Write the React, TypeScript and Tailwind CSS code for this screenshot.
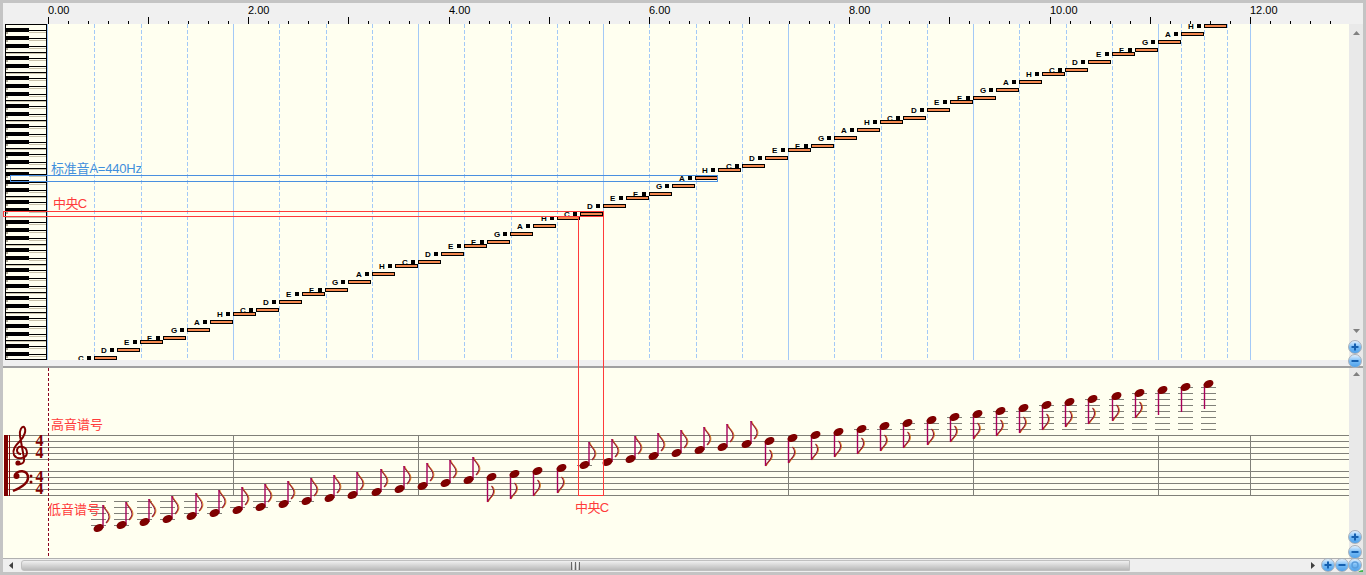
import React from "react";

const NAMES = ["C", "D", "E", "F", "G", "A", "H"];
const OFFS = [0, 8, 16, 20, 28, 36, 44];
const NOTE_COUNT = 49;

const noteX = (i: number) => Math.round(94 + i * 23.125);
const barY = (i: number) =>
  356 - 48 * Math.floor(i / 7) - OFFS[i % 7];

function Ruler() {
  const ticks = Array.from({ length: 65 }, (_, i) => i);
  return (
    <svg width="1357" height="21" viewBox="3 3 1357 21" className="block">
      {ticks.map((i) => {
        const x = Math.round(48 + i * 20.03) + 0.5;
        return (
          <line
            key={i}
            x1={x}
            x2={x}
            y1={i % 5 === 0 ? 17 : 21}
            y2={24}
            stroke="#000"
            shapeRendering="crispEdges"
          />
        );
      })}
      {ticks
        .filter((i) => i % 10 === 0)
        .map((i) => (
          <text
            key={i}
            x={Math.round(48 + i * 20.03)}
            y={14}
            fontSize="11"
            fill="#000"
          >
            {(i / 5).toFixed(2)}
          </text>
        ))}
    </svg>
  );
}

function Piano() {
  const blacks: number[] = [];
  const seps: number[] = [];
  for (let k = 0; k < 7; k++) {
    [30, 38, 46, 58, 66].forEach((o) => blacks.push(o + 48 * k));
    [52, 72].forEach((o) => seps.push(o + 48 * k));
  }
  return (
    <svg width="43" height="336" viewBox="5 24 43 336" className="block" shapeRendering="crispEdges">
      <rect x="5" y="24" width="43" height="336" fill="#fffff0" />
      {seps.map((y) => (
        <g key={y}>
          <rect x="5" y={y} width="42" height="1" fill="#000" />
          <rect x="5" y={y + 1} width="42" height="1" fill="#c8c2ac" />
        </g>
      ))}
      {blacks.map((y) => (
        <g key={y}>
          <rect x="29" y={y + 2} width="18" height="1" fill="#c8c2ac" />
          <rect x="5" y={y + 2} width="3" height="2" fill="#a8a290" />
          <rect x="29" y={y} width="18" height="1" fill="#000" />
          <rect x="5" y={y - 2} width="24" height="4" fill="#000" />
        </g>
      ))}
      <rect x="5" y="24" width="42" height="1" fill="#000" />
      <rect x="5" y="359" width="42" height="1" fill="#000" />
      <rect x="5" y="24" width="1" height="336" fill="#000" />
      <rect x="46" y="24" width="1" height="336" fill="#000" />
      <rect x="47" y="24" width="1" height="336" fill="#a0c8f8" />
    </svg>
  );
}

function PitchGrid() {
  const beats = Array.from({ length: 24 }, (_, i) => i + 1);
  const extra = [1181, 1204, 1227];
  const notes = Array.from({ length: NOTE_COUNT }, (_, i) => i);
  return (
    <svg width="1301" height="336" viewBox="48 24 1301 336" className="block">
      <g shapeRendering="crispEdges" stroke="#a3c9f7">
        {beats.map((b) => {
          const x = Math.round(48 + b * 46.25) + 0.5;
          return (
            <line
              key={b}
              x1={x}
              x2={x}
              y1={24}
              y2={360}
              strokeDasharray={b % 4 === 0 ? undefined : "4 2"}
            />
          );
        })}
        {extra.map((x) => (
          <line key={x} x1={x + 0.5} x2={x + 0.5} y1={24} y2={360} strokeDasharray="4 2" />
        ))}
        <line x1={1250.5} x2={1250.5} y1={24} y2={360} />
      </g>
      {notes.map((i) => {
        const x = noteX(i);
        const y = barY(i);
        return (
          <g key={i}>
            <text x={x - 16} y={y + 5} fontSize="8" fontWeight="700" fill="#000">
              {NAMES[i % 7]}
            </text>
            <rect x={x - 7} y={y} width="4" height="4" fill="#000" shapeRendering="crispEdges" />
            <rect x={x} y={y} width="23" height="4" fill="#000" shapeRendering="crispEdges" />
            <rect x={x + 1} y={y + 1} width="21" height="2" fill="#f2874e" shapeRendering="crispEdges" />
          </g>
        );
      })}
    </svg>
  );
}

function Note({ i }: { i: number }) {
  const x = noteX(i);
  const y = 528 - 3 * i;
  const up = i <= 16 || (i >= 21 && i <= 28);
  const flag = i <= 45;
  const ledgers: number[] = [];
  for (let l = 501; l <= 525; l += 6) if (l <= y) ledgers.push(l);
  for (let l = 429; l >= 387; l -= 6) if (l >= y) ledgers.push(l);
  if (y === 465) ledgers.push(465);
  const sx = up ? x + 9 : x + 0.5;
  const sEnd = up ? y - 23 : y + 25;
  const flagPath = up
    ? `c 1 5 7 7 6 13 c -0.5 2 -2 4 -3 5`
    : `c 2 -5 7 -6 6 -12 c -0.3 -1.5 -1 -3 -2 -4`;
  return (
    <g>
      {ledgers.map((l) => (
        <line key={l} x1={x - 3} x2={x + 12} y1={l + 0.5} y2={l + 0.5} stroke="#808078" shapeRendering="crispEdges" />
      ))}
      {flag && (
        <>
          <path d={`M ${sx} ${sEnd} ${flagPath}`} fill="none" stroke="#8a1040" strokeWidth="1.2" />
          <path d={`M ${sx + 0.8} ${sEnd} ${flagPath}`} fill="none" stroke="#d06a00" strokeWidth="0.8" />
        </>
      )}
      <line x1={sx} x2={sx} y1={y} y2={sEnd} stroke="#a8005a" strokeWidth="1.4" />
      <ellipse cx={x + 4.5} cy={y} rx="5.2" ry="3.7" transform={`rotate(-25 ${x + 4.5} ${y})`} fill="#7f0000" />
    </g>
  );
}

function Score() {
  const staffY = [435, 441, 447, 453, 459, 471, 477, 483, 489, 495];
  const bars = [233, 418, 603, 788, 973, 1158, 1250];
  const notes = Array.from({ length: NOTE_COUNT }, (_, i) => i);
  return (
    <svg width="1346" height="190" viewBox="3 368 1346 190" className="block">
      {staffY.map((y) => (
        <line key={y} x1={4} x2={1350} y1={y + 0.5} y2={y + 0.5} stroke="#808078" shapeRendering="crispEdges" />
      ))}
      {bars.map((x) => (
        <line key={x} x1={x + 0.5} x2={x + 0.5} y1={435} y2={496} stroke="#808078" shapeRendering="crispEdges" />
      ))}
      <rect x="4" y="435" width="4" height="61" fill="#7f0000" shapeRendering="crispEdges" />
      <rect x="9" y="435" width="1" height="61" fill="#7f0000" shapeRendering="crispEdges" />

      {/* treble clef */}
      <path
        d="M 17 461 C 19 466 25 464 24 458 L 20 436 C 19 430 22 426 24 427 C 27 430 24 437 20 441 C 15 446 12 450 14 455 C 17 460 26 459 27 453 C 27 446 18 444 17 450 C 17 453 19 454 21 454"
        fill="none"
        stroke="#7f0000"
        strokeWidth="2"
      />
      <circle cx="18" cy="463" r="2.6" fill="#7f0000" />

      {/* bass clef */}
      <path
        d="M 15 475 C 17 470 28 469 28 478 C 28 484 20 488 13 491"
        fill="none"
        stroke="#7f0000"
        strokeWidth="2.4"
      />
      <circle cx="16.5" cy="476" r="3" fill="#7f0000" />
      <circle cx="31" cy="476" r="1.5" fill="#7f0000" />
      <circle cx="31" cy="482" r="1.5" fill="#7f0000" />

      {[447, 459, 483, 495].map((y) => (
        <text
          key={y}
          x="39.5"
          y={y - 1}
          textAnchor="middle"
          fontSize="16"
          fontWeight="700"
          fill="#7f0000"
          className="[font-family:'Liberation_Serif',serif]"
        >
          4
        </text>
      ))}

      <line x1="48.5" x2="48.5" y1="368" y2="558" stroke="#8a0020" strokeDasharray="3 2" shapeRendering="crispEdges" />

      {notes.map((i) => (
        <Note key={i} i={i} />
      ))}
    </svg>
  );
}

function Arrow({ dir, color = "#808080" }: { dir: "up" | "down" | "left" | "right"; color?: string }) {
  const points = {
    up: "0,4 7,4 3.5,0",
    down: "0,0 7,0 3.5,4",
    left: "4,0 4,7 0,3.5",
    right: "0,0 0,7 4,3.5",
  }[dir];
  const vertical = dir === "up" || dir === "down";
  return (
    <svg width={vertical ? 7 : 4} height={vertical ? 4 : 7} className="block shrink-0">
      <polygon points={points} fill={color} />
    </svg>
  );
}

function ZoomButton({ kind, className }: { kind: "plus" | "minus" | "reset"; className: string }) {
  return (
    <div
      className={`absolute h-[14px] w-[14px] rounded-full border border-[#a8b0ba] bg-gradient-to-b from-[#e2f1fe] via-[#78bcf5] to-[#4ea2ec] ${className}`}
    >
      <svg width="12" height="12" className="block">
        {kind === "plus" && (
          <path d="M2.5 6H9.5M6 2.5V9.5" stroke="#1560b0" strokeWidth="2" />
        )}
        {kind === "minus" && <path d="M2.5 6H9.5" stroke="#1560b0" strokeWidth="2" />}
        {kind === "reset" && (
          <circle cx="6" cy="6" r="3" fill="none" stroke="#5a9ddc" strokeWidth="1.5" />
        )}
      </svg>
    </div>
  );
}

function Labels() {
  return (
    <>
      <span className="absolute left-[51px] top-[162px] text-[13px] leading-[13px] tracking-[-0.2px] text-[#3f8fdc]">
        标准音A=440Hz
      </span>
      <span className="absolute left-[53px] top-[197px] text-[13px] leading-[13px] tracking-[-0.6px] text-[#ff3b3b]">
        中央C
      </span>
      <span className="absolute left-[51px] top-[418px] text-[13px] leading-[13px] text-[#ff3b3b]">
        高音谱号
      </span>
      <span className="absolute left-[48px] top-[503px] text-[13px] leading-[13px] text-[#ff3b3b]">
        低音谱号
      </span>
      <span className="absolute left-[575px] top-[501px] text-[13px] leading-[13px] tracking-[-0.6px] text-[#ff3b3b]">
        中央C
      </span>
    </>
  );
}

export default function App() {
  return (
    <div className="relative box-border h-[575px] w-[1366px] overflow-hidden border-[3px] border-[#c4c4c4] bg-[#f0f0f0] [font-family:'Liberation_Sans','Noto_Sans_CJK_SC',sans-serif]">
      <div className="flex h-[21px] items-start">
        <Ruler />
      </div>

      {/* pitch pane */}
      <div className="flex h-[336px]">
        <div className="w-[45px] pl-[2px]">
          <Piano />
        </div>
        <div className="w-[1301px] bg-[#fffff0]">
          <PitchGrid />
        </div>
        <div className="flex w-[14px] flex-col items-center justify-between bg-[#e9e9e9] pb-[27px] pt-[7px]">
          <Arrow dir="up" />
          <Arrow dir="down" />
        </div>
      </div>
      <div className="h-[6px]" />
      <div className="h-[2px] bg-[#a0a0a0]" />

      {/* score pane */}
      <div className="flex h-[190px]">
        <div className="w-[1346px] bg-[#fffff0]">
          <Score />
        </div>
        <div className="flex w-[14px] flex-col items-center bg-[#e9e9e9] pt-[4px]">
          <Arrow dir="up" />
        </div>
      </div>

      {/* horizontal scrollbar */}
      <div className="flex h-[14px] items-center border-t border-[#b0b0b0] bg-[#efefef]">
        <div className="flex w-[18px] justify-start pl-[6px]">
          <Arrow dir="left" color="#404040" />
        </div>
        <div className="flex h-[11px] w-[1109px] items-center justify-center gap-[1px] rounded-l-[3px] border border-[#c0c0c0] bg-gradient-to-b from-[#f0f0f0] to-[#b9b9b9]">
          <span className="h-[8px] w-[1px] bg-[#666]" />
          <span className="h-[8px] w-[1px] bg-[#eee]" />
          <span className="h-[8px] w-[1px] bg-[#666]" />
          <span className="h-[8px] w-[1px] bg-[#eee]" />
          <span className="h-[8px] w-[1px] bg-[#666]" />
        </div>
        <div className="ml-[181px]">
          <Arrow dir="right" color="#404040" />
        </div>
      </div>

      {/* overlays, positioned against the padding box: subtract the 3px frame */}
      <div className="absolute -left-[3px] -top-[3px] h-[575px] w-[1366px] overflow-hidden">
        <Labels />
        <div className="absolute left-[10px] top-[175px] h-[7px] w-[708px] border border-[#4a90e0]" />
        <div className="absolute left-[3px] top-[211px] h-[6px] w-[601px] border border-[#ff3b3b]" />
        <div className="absolute left-[578px] top-[216px] h-[280px] w-[26px] border border-[#ff3b3b]" />
        <ZoomButton kind="plus" className="left-[1348px] top-[340px]" />
        <ZoomButton kind="minus" className="left-[1348px] top-[354px]" />
        <ZoomButton kind="plus" className="left-[1348px] top-[530px]" />
        <ZoomButton kind="minus" className="left-[1348px] top-[545px]" />
        <ZoomButton kind="plus" className="left-[1321px] top-[558px]" />
        <ZoomButton kind="minus" className="left-[1335px] top-[558px]" />
        <ZoomButton kind="reset" className="left-[1348px] top-[558px]" />
        <div className="absolute left-[1354px] top-[570px] h-[20px] w-[20px] rounded-full bg-[#3fb54a]" />
      </div>
    </div>
  );
}
